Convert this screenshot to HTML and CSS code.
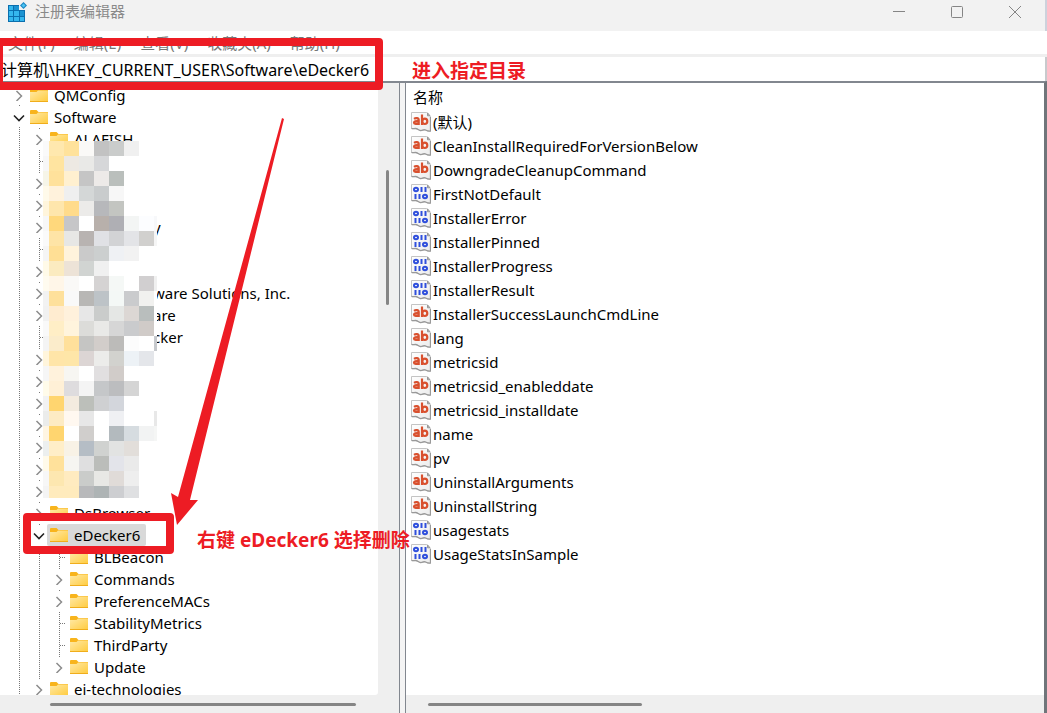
FILE: index.html
```html
<!DOCTYPE html>
<html lang="zh-CN">
<head>
    <meta charset="utf-8">
    <title>注册表编辑器</title>
    <link rel="stylesheet" href="styles.css">
</head>

<body>
<!-- shared icons -->
<svg class="sprite" aria-hidden="true">
    <defs>
        <linearGradient id="folder-fill" x1="0" y1="0" x2="1" y2="1">
            <stop offset="0" stop-color="#ffe9a6"/>
            <stop offset="1" stop-color="#ffcb3e"/>
        </linearGradient>
        <linearGradient id="page-fill" x1="0" y1="0" x2="1" y2="1">
            <stop offset="0" stop-color="#ffffff"/>
            <stop offset="1" stop-color="#ececec"/>
        </linearGradient>
    </defs>
    <symbol id="folder" viewBox="0 0 18 14">
        <path d="M0 1a1 1 0 0 1 1-1h5.500l2 2H18v4H0z" fill="#f8b41c"/>
        <path d="M0 4h6.500l1.500-1.500h10V14H0z" fill="url(#folder-fill)"/>
        <path d="M0 13h18v1H0z" fill="#f0ad1b"/>
    </symbol>
    <symbol id="closed" viewBox="0 0 12 12">
        <path d="M3.500 2l5 5-5 5" fill="none" stroke="#8c8c8c" stroke-width="1.500"/>
    </symbol>
    <symbol id="open" viewBox="0 0 12 12">
        <path d="M1 4.500l5 5 5-5" fill="none" stroke="#222" stroke-width="1.600"/>
    </symbol>
    <symbol id="page" viewBox="0 0 20 20">
        <path d="M.5.5h15l4 4v14.500c-2 .5-3 0-5-1s-3 .8-5 .5-3-2-5-2-3 .5-4-.3z" fill="url(#page-fill)" stroke="#c4c4c4"/>
        <path d="M16.500.8v3h2.500z" fill="#bbb" stroke="#999"/>
        <path d="M19.500 5v14c-2 .5-3 0-5-1s-3 .8-5 .5-3-2-5-2-3 .5-4-.3" fill="none" stroke="#999" stroke-width="1.300"/>
    </symbol>
    <symbol id="string" viewBox="0 0 20 20">
        <use href="#page"/>
        <g fill="none" stroke="#d9502e" stroke-width="2.200">
            <path d="M3 6.800c1.500-1 4.700-1 4.700 1.200V13M7.700 9.300c-3-.4-4.700.2-4.700 1.500s3 1.800 4.700 0"/>
            <path d="M11 2.500V13"/>
            <ellipse cx="13.800" cy="9.300" rx="2.500" ry="2.700"/>
        </g>
    </symbol>
    <symbol id="binary" viewBox="0 0 20 20">
        <use href="#page"/>
        <g fill="none" stroke="#2f4fdc" stroke-width="2">
            <ellipse cx="5" cy="5.500" rx="2" ry="1.700"/>
            <path d="M10.500 3v5M14.500 3v5M4.500 10v5M8.500 10v5"/>
            <ellipse cx="14" cy="12.500" rx="2" ry="1.700"/>
        </g>
    </symbol>
</svg>

<div class="window">
    <header class="titlebar">
        <svg class="app-icon" viewBox="0 0 20 20">
            <rect x="0" y="3" width="17" height="17" fill="#0b6fae"/>
            <g fill="#35b7ee">
                <rect x="1" y="4" width="4" height="4"/><rect x="1" y="9" width="4" height="5"/><rect x="1" y="15" width="4" height="4"/>
                <rect x="6" y="9" width="5" height="5"/><rect x="6" y="15" width="5" height="4"/><rect x="12" y="15" width="4" height="4"/>
            </g>
            <rect x="6" y="4" width="5" height="4" fill="#1c93d2"/>
            <rect x="12" y="9" width="4" height="5" fill="#1c93d2"/>
            <path d="M11 3h6v5h-6z" fill="#f2f2f2"/>
            <path d="M15.500 0L19 3.500 15.500 7 12 3.500z" fill="#1a86c2"/>
            <path d="M15.500 1.500l2 2-2 2-2-2z" fill="#4cc3f2"/>
        </svg>
        <h1>注册表编辑器</h1>
        <div class="window-buttons">
            <button type="button" aria-label="最小化"><svg viewBox="0 0 12 12"><path d="M0 5.500h12"/></svg></button>
            <button type="button" aria-label="最大化"><svg viewBox="0 0 12 12"><rect x=".5" y=".5" width="11" height="11" rx="1"/></svg></button>
            <button type="button" aria-label="关闭"><svg viewBox="0 0 12 12"><path d="M0 0l12 12M12 0L0 12"/></svg></button>
        </div>
    </header>

    <nav class="menubar">
        <button type="button">文件(F)</button>
        <button type="button">编辑(E)</button>
        <button type="button">查看(V)</button>
        <button type="button">收藏夹(A)</button>
        <button type="button">帮助(H)</button>
    </nav>

    <input class="address" type="text" aria-label="地址" value="计算机\HKEY_CURRENT_USER\Software\eDecker6">

    <main class="panes">
        <section class="tree-pane">
            <div class="tree-view">
                <ul class="tree" id="tree"></ul>
                <div class="mosaic" id="mosaic"></div>
            </div>
            <div class="scroll-y"><span></span></div>
            <div class="scroll-x"><span></span></div>
        </section>

        <div class="splitter"></div>

        <section class="value-pane">
            <div class="value-view">
                <table class="values">
                    <thead>
                        <tr><th>名称</th></tr>
                    </thead>
                    <tbody id="values-body"></tbody>
                </table>
            </div>
            <div class="scroll-x"><span></span></div>
        </section>
    </main>

    <!-- notes drawn over the window -->
    <div class="mark mark-address"></div>
    <div class="mark mark-key"></div>
    <p class="note note-address">进入指定目录</p>
    <p class="note note-key">右键 eDecker6 选择删除</p>
    <svg class="arrow" viewBox="0 0 28 407">
        <path d="M111 0L7 379 0 375 6 407 27 382 19 382 113 1z"/>
    </svg>
</div>

<script src="script.js"></script>
</body>
</html>
```
FILE: styles.css
```css
* {
    box-sizing: border-box;
}

body {
    margin: 0;
    background: #fff;
    color: #000;
    font-family: "Noto Sans", "Noto Sans CJK SC", sans-serif;
    font-size: 15px;
}

button, input {
    font: inherit;
    border: 0;
    padding: 0;
    background: none;
}

.sprite {
    position: absolute;
    width: 0;
    height: 0;
}

.window {
    position: relative;
    display: flex;
    flex-direction: column;
    height: 100vh;
    overflow: hidden;
}

/* title bar */
.titlebar {
    display: flex;
    align-items: flex-start;
    flex: none;
    height: 31px;
    padding: 0 1px 0 8px;
    background: #f2f2f2;
    border-right: 2px solid #cdd2dc;
}
.app-icon {
    width: 20px;
    height: 20px;
    margin-top: 2px;
}
.titlebar h1 {
    margin: 0 0 0 7px;
    color: #8a8a8a;
    font-size: 15px;
    font-weight: normal;
    line-height: 22px;
}
.window-buttons {
    display: flex;
    margin-left: auto;
}
.window-buttons button {
    width: 58px;
    height: 24px;
}
.window-buttons svg {
    display: block;
    width: 12px;
    height: 12px;
    margin: 0 auto;
    overflow: visible;
    fill: none;
    stroke: #858585;
}

/* menu and address */
.menubar {
    display: flex;
    flex: none;
    gap: 19px;
    height: 26px;
    padding-left: 8px;
    border-bottom: 3px solid #efefef;
}
.menubar button {
    height: 24px;
    color: #777;
    line-height: 24px;
}
.address {
    flex: none;
    width: 100%;
    height: 24px;
    padding: 0 0 1px 1px;
    border-right: 2px solid #c8cacd;
    color: #000;
    font-size: 16px;
    outline: 0;
}

/* panes */
.panes {
    display: flex;
    flex: 1;
    min-height: 0;
    border-top: 2px solid #82878f;
    border-right: 3px solid #70757a;
}
.tree-pane {
    display: grid;
    grid-template-columns: 1fr 21px;
    grid-template-rows: 1fr 18px;
    flex: none;
    width: 400px;
    background: #efefef;
    border-right: 1px solid #82878f;
}
.tree-view {
    position: relative;
    min-height: 0;
    overflow: hidden;
    background: #fff;
    border-radius: 0 0 3px 0;
}
.splitter {
    flex: none;
    width: 5px;
    background: #f4f4f4;
}
.value-pane {
    display: grid;
    grid-template-rows: 1fr 18px;
    flex: 1;
    min-width: 0;
    background: #efefef;
    border-left: 1px solid #82878f;
}
.value-view {
    min-height: 0;
    overflow: hidden;
    background: #fff;
}

.scroll-y {
    padding: 87px 0 0 8px;
}
.scroll-y span {
    display: block;
    width: 3px;
    height: 135px;
    border-radius: 2px;
    background: #858585;
}
.scroll-x {
    padding: 8px 22px 0 50px;
}
.scroll-x span {
    display: block;
    height: 3px;
    border-radius: 2px;
    background: #858585;
}
.value-pane .scroll-x {
    padding: 8px 0 0 22px;
}
.value-pane .scroll-x span {
    width: 214px;
}

/* tree */
.tree, .tree ul {
    margin: 0;
    padding: 0;
    list-style: none;
    background: linear-gradient(#777 50%, transparent 50%) 19px 0 / 1px 2px repeat-y;
}
.tree {
    padding-top: 1px;
}
.tree ul {
    margin-left: 20px;
}
.node {
    display: flex;
    align-items: center;
    height: 22px;
    padding-left: 13px;
    white-space: nowrap;
}
.toggle {
    flex: none;
    width: 12px;
    height: 20px;
    margin-right: 2px;
    background: #fff;
}
.leaf {
    flex: none;
    width: 7px;
    height: 1px;
    margin-left: 6px;
    margin-right: 1px;
    background: linear-gradient(90deg, transparent 50%, #777 50%) 0 0 / 2px 1px repeat-x;
}
.label {
    display: flex;
    align-items: center;
    height: 22px;
    padding: 0 6px 0 3px;
    line-height: 22px;
}
.label svg {
    width: 18px;
    height: 14px;
    margin-right: 6px;
}
.selected {
    background: #d9d9d9;
    border-radius: 2px;
}
.covered {
    padding-left: 106px;
}
.covered svg {
    display: none;
}

/* pixelated patch over the private keys */
.mosaic {
    position: absolute;
    top: 58px;
    left: 43px;
    display: grid;
    grid-template-columns: 6px repeat(7, 15px) 3px;
    grid-auto-rows: 15px;
    height: 357px;
    overflow: hidden;
}

/* values */
.values {
    width: 100%;
    border-collapse: collapse;
}
.values th {
    height: 27px;
    padding: 0 0 0 7px;
    font-weight: normal;
    line-height: 24px;
    text-align: left;
}
.values td {
    padding: 0 0 0 5px;
}
.value {
    display: flex;
    align-items: center;
    gap: 2px;
    height: 24px;
    line-height: 24px;
    white-space: nowrap;
}
.value svg {
    flex: none;
    width: 20px;
    height: 20px;
}

/* notes */
.mark {
    position: absolute;
    border: 8px solid #ed1c24;
    border-radius: 4px;
}
.mark-address {
    top: 38px;
    left: -5px;
    width: 388px;
    height: 52px;
}
.mark-key {
    top: 513px;
    left: 23px;
    width: 151px;
    height: 41px;
}
.note {
    position: absolute;
    margin: 0;
    color: #ed1c24;
    font-size: 19px;
    font-weight: bold;
    line-height: 24px;
    white-space: nowrap;
}
.note-address {
    top: 59px;
    left: 412px;
}
.note-key {
    top: 528px;
    left: 197px;
}
.arrow {
    position: absolute;
    top: 118px;
    left: 171px;
    width: 28px;
    height: 407px;
    overflow: visible;
    fill: #ed1c24;
}
```
FILE: script.js
```js
// name, toggle state, children; "covered" keys only show the end of their name
const keys = [
    { name: 'QMConfig', toggle: 'closed' },
    { name: 'Software', toggle: 'open', children: [
        { name: 'ALAFISH', toggle: 'closed' },
        { name: '', covered: true },
        { name: '', toggle: 'closed', covered: true },
        { name: '', toggle: 'closed', covered: true },
        { name: 'y', toggle: 'closed', covered: true },
        { name: '', covered: true },
        { name: '', toggle: 'closed', covered: true },
        { name: 'ware Solutions, Inc.', toggle: 'closed', covered: true },
        { name: 'are', toggle: 'closed', covered: true },
        { name: 'cker', covered: true },
        { name: '', toggle: 'closed', covered: true },
        { name: '', toggle: 'closed', covered: true },
        { name: '', toggle: 'closed', covered: true },
        { name: '', toggle: 'closed', covered: true },
        { name: '', toggle: 'closed', covered: true },
        { name: '', toggle: 'closed', covered: true },
        { name: '', toggle: 'closed', covered: true },
        { name: 'DsBrowser', toggle: 'closed' },
        { name: 'eDecker6', toggle: 'open', selected: true, children: [
            { name: 'BLBeacon' },
            { name: 'Commands', toggle: 'closed' },
            { name: 'PreferenceMACs', toggle: 'closed' },
            { name: 'StabilityMetrics' },
            { name: 'ThirdParty' },
            { name: 'Update', toggle: 'closed' },
        ] },
        { name: 'ei-technologies', toggle: 'closed' },
    ] },
];

const values = [
    ['string', '(默认)'],
    ['string', 'CleanInstallRequiredForVersionBelow'],
    ['string', 'DowngradeCleanupCommand'],
    ['binary', 'FirstNotDefault'],
    ['binary', 'InstallerError'],
    ['binary', 'InstallerPinned'],
    ['binary', 'InstallerProgress'],
    ['binary', 'InstallerResult'],
    ['string', 'InstallerSuccessLaunchCmdLine'],
    ['string', 'lang'],
    ['string', 'metricsid'],
    ['string', 'metricsid_enableddate'],
    ['string', 'metricsid_installdate'],
    ['string', 'name'],
    ['string', 'pv'],
    ['string', 'UninstallArguments'],
    ['string', 'UninstallString'],
    ['binary', 'usagestats'],
    ['binary', 'UsageStatsInSample'],
];

// one line per row of blocks, missing blocks are white
const blocks = [
    'fafafa ffe8ae ffe29b faf9f7 c2c2c2 cacccb f0f0f0',
    'f7f7f7 ffe4a0 ede9e3 e9e9e7 d6d7d9',
    'f6f5e8 ffe19b fff0d0 c5c5c5 edeae8 babfbc',
    'fffaea fff2dc efefef d4d7d7 c9cccd f7f7f7',
    'fff5dc fee6ac ffdb8b ecebe9 b7b8bb c3c5c1',
    'f7f7f7 ffd87c c6c6c8 ffffff b8b0ab afafb4 f3f5f4 fcfdff f7f8fa',
    'fafafa fee4a6 e7e7e5 b8b3b1 e0e1e5 d2d3d5 e3e4e7 d1d0ce f5f5f5',
    'f5f5f5 ffdf95 fff3dc cacaca cccfcf eff1f4 f2f2f2',
    'fffae8 fbebc0 ede3d7 d1d4d2 f0f0f0',
    'fffbef fff6e8 faf9f7 ffffff d5d3d3 f5f8f6 ffffff d1cfd0 f0f0f0',
    'f2f2f2 fee09b f9f9f9 b8b7b5 bdc3c7 f4f8f6 cacbcd f1f1ef',
    'f1f1f1 ffecd0 fff1dc e7e7e7 cacccb e5e7e5 dcd7d4 b9bebd',
    'f9f9f9 ffeec6 fff4dd dcdcd9 e9e9e7 d6d6d6 cacbcd d0cbc8',
    'f4f4f4 fbeccb ffe09b c5c5c3 d2cdca bcbbb9 fcfcfc ffffff c6c9cd',
    'fff5dc ffe5a8 fee6a8 dcd5d4 ececea d2d2ce edf2f6 e4e6ea',
    'f6f6f6 fff2dc f7f6f2 ffffff e1dfe0 d1ccc9',
    'fffbea fff0d6 dedcde f4f4f4 c5c7c9 bcbdbf d5d5d5',
    'f2f2f2 ffd56f f3ebdf bcbfba cfd0d2 d3d6dc',
    'ebeceb fdebc4 fff8f0 e7e7e7 ffffff eff0f3 ffffff ffffff e8e8e8',
    'fff5e2 ffd56f ffffff d0cecc ffffff b3babe d6dce0 f2f3f3 f5f6f5',
    'ecefef ffeec8 f8f2e6 b5bdc5 d0d2d0 e2e3e2 e2deda',
    'fffaea ffe19b f6f5f1 dfdfe0 bbbdba e3e4ea eaeaea',
    'f7f7f7 fde7b0 ffebc0 caccca e8e8e5 e0dbd8 eeeeee',
    'f4f4f4 ffebbd ffebbd b8b9bb aeb4b5 cdced1 dfe0e2',
];

function createNode(key) {
    const li = document.createElement('li');
    const toggle = key.toggle
        ? `<svg class="toggle" viewBox="0 0 12 12"><use href="#${key.toggle}"/></svg>`
        : '<span class="leaf"></span>';
    const state = (key.selected ? ' selected' : '') + (key.covered ? ' covered' : '');
    li.innerHTML = `<div class="node">${toggle}<span class="label${state}"><svg><use href="#folder"/></svg>${key.name}</span></div>`;
    if (key.children) {
        const ul = document.createElement('ul');
        key.children.forEach(child => ul.appendChild(createNode(child)));
        li.appendChild(ul);
    }
    return li;
}

const tree = document.getElementById('tree');
keys.forEach(key => tree.appendChild(createNode(key)));

const valuesBody = document.getElementById('values-body');
values.forEach(([type, name]) => {
    const tr = document.createElement('tr');
    tr.innerHTML = `<td><div class="value"><svg><use href="#${type}"/></svg>${name}</div></td>`;
    valuesBody.appendChild(tr);
});

const mosaic = document.getElementById('mosaic');
blocks.forEach(row => {
    const colors = row.split(' ');
    for (let i = 0; i < 9; i++) {
        const block = document.createElement('i');
        block.style.background = '#' + (colors[i] || 'ffffff');
        mosaic.appendChild(block);
    }
});
```
